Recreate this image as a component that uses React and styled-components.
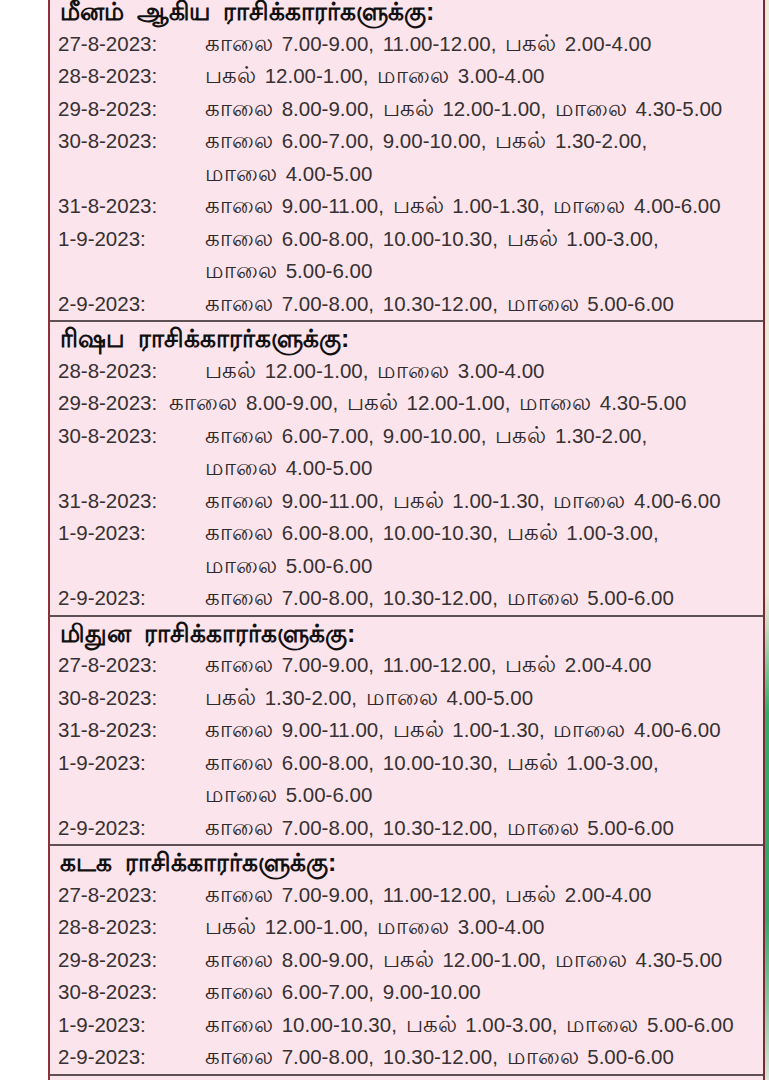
import React from 'react';
import styled, { createGlobalStyle } from 'styled-components';

const GlobalStyle = createGlobalStyle`
  html, body {
    margin: 0;
    padding: 0;
    background: #ffffff;
    overflow: hidden;
  }
`;

const Page = styled.div`
  display: flex;
  width: 769px;
  height: 1080px;
  overflow: hidden;
  font-family: "Liberation Sans", "Noto Sans", sans-serif;
`;

const Gutter = styled.div`
  width: 48px;
  flex-shrink: 0;
  background: #ffffff;
`;

const Box = styled.div`
  flex: 1;
  margin-top: -5px;
  background: #fce4ec;
  border-left: 2px solid #8e2f3a;
  border-right: 2px solid #7c2a32;
`;

const Strip = styled.div`
  width: 4px;
  flex-shrink: 0;
  background: linear-gradient(
    to bottom,
    #f3ead8 0%,
    #efe6d6 55%,
    #c9dcc0 58%,
    #2fae6a 66%,
    #35a86b 85%,
    #8fc7a4 93%,
    #d9e6d8 100%
  );
`;

const Section = styled.section`
  border-bottom: 2px solid #5f5055;
`;

const Title = styled.h2`
  margin: 0;
  padding-left: 10px;
  height: 32.5px;
  line-height: 32.5px;
  font-size: 25px;
  font-weight: 700;
  word-spacing: 6px;
  color: #111111;
  white-space: nowrap;
`;

const Row = styled.div`
  display: ${p => (p.inline ? 'flex' : 'grid')};
  grid-template-columns: 147px 1fr;
  gap: ${p => (p.inline ? '12px' : '0')};
  padding-left: 8px;
  font-size: 20.5px;
  line-height: 32.5px;
  color: #363132;
`;

const DateCell = styled.div`
  white-space: nowrap;
`;

const Times = styled.div`
  white-space: nowrap;
  word-spacing: 3px;
`;

const Word = styled.span`
  font-size: 22.5px;
  color: #2e2a2b;
`;

const tamil = /[\u0B80-\u0BFF]/;

const Line = ({ text }) => (
  <div>
    {text.split(' ').map((part, i) => (
      <React.Fragment key={i}>
        {i > 0 && ' '}
        {tamil.test(part) ? <Word>{part}</Word> : part}
      </React.Fragment>
    ))}
  </div>
);

const sections = [
  {
    title: 'மீனம் ஆகிய ராசிக்காரர்களுக்கு:',
    rows: [
      { date: '27-8-2023:', lines: ['காலை 7.00-9.00, 11.00-12.00, பகல் 2.00-4.00'] },
      { date: '28-8-2023:', lines: ['பகல் 12.00-1.00, மாலை 3.00-4.00'] },
      { date: '29-8-2023:', lines: ['காலை 8.00-9.00, பகல் 12.00-1.00, மாலை 4.30-5.00'] },
      { date: '30-8-2023:', lines: ['காலை 6.00-7.00, 9.00-10.00, பகல் 1.30-2.00,', 'மாலை 4.00-5.00'] },
      { date: '31-8-2023:', lines: ['காலை 9.00-11.00, பகல் 1.00-1.30, மாலை 4.00-6.00'] },
      { date: '1-9-2023:', lines: ['காலை 6.00-8.00, 10.00-10.30, பகல் 1.00-3.00,', 'மாலை 5.00-6.00'] },
      { date: '2-9-2023:', lines: ['காலை 7.00-8.00, 10.30-12.00, மாலை 5.00-6.00'] },
    ],
  },
  {
    title: 'ரிஷப ராசிக்காரர்களுக்கு:',
    rows: [
      { date: '28-8-2023:', lines: ['பகல் 12.00-1.00, மாலை 3.00-4.00'] },
      { date: '29-8-2023:', inline: true, lines: ['காலை 8.00-9.00, பகல் 12.00-1.00, மாலை 4.30-5.00'] },
      { date: '30-8-2023:', lines: ['காலை 6.00-7.00, 9.00-10.00, பகல் 1.30-2.00,', 'மாலை 4.00-5.00'] },
      { date: '31-8-2023:', lines: ['காலை 9.00-11.00, பகல் 1.00-1.30, மாலை 4.00-6.00'] },
      { date: '1-9-2023:', lines: ['காலை 6.00-8.00, 10.00-10.30, பகல் 1.00-3.00,', 'மாலை 5.00-6.00'] },
      { date: '2-9-2023:', lines: ['காலை 7.00-8.00, 10.30-12.00, மாலை 5.00-6.00'] },
    ],
  },
  {
    title: 'மிதுன ராசிக்காரர்களுக்கு:',
    rows: [
      { date: '27-8-2023:', lines: ['காலை 7.00-9.00, 11.00-12.00, பகல் 2.00-4.00'] },
      { date: '30-8-2023:', lines: ['பகல் 1.30-2.00, மாலை 4.00-5.00'] },
      { date: '31-8-2023:', lines: ['காலை 9.00-11.00, பகல் 1.00-1.30, மாலை 4.00-6.00'] },
      { date: '1-9-2023:', lines: ['காலை 6.00-8.00, 10.00-10.30, பகல் 1.00-3.00,', 'மாலை 5.00-6.00'] },
      { date: '2-9-2023:', lines: ['காலை 7.00-8.00, 10.30-12.00, மாலை 5.00-6.00'] },
    ],
  },
  {
    title: 'கடக ராசிக்காரர்களுக்கு:',
    rows: [
      { date: '27-8-2023:', lines: ['காலை 7.00-9.00, 11.00-12.00, பகல் 2.00-4.00'] },
      { date: '28-8-2023:', lines: ['பகல் 12.00-1.00, மாலை 3.00-4.00'] },
      { date: '29-8-2023:', lines: ['காலை 8.00-9.00, பகல் 12.00-1.00, மாலை 4.30-5.00'] },
      { date: '30-8-2023:', lines: ['காலை 6.00-7.00, 9.00-10.00'] },
      { date: '1-9-2023:', lines: ['காலை 10.00-10.30, பகல் 1.00-3.00, மாலை 5.00-6.00'] },
      { date: '2-9-2023:', lines: ['காலை 7.00-8.00, 10.30-12.00, மாலை 5.00-6.00'] },
    ],
  },
  {
    title: 'சிம்ம ராசிக்காரர்களுக்கு:',
    rows: [],
  },
];

const App = () => {
  return (
    <Page>
      <GlobalStyle />
      <Gutter />
      <Box>
        {sections.map(section => (
          <Section key={section.title}>
            <Title>{section.title}</Title>
            {section.rows.map(row => (
              <Row key={row.date} inline={row.inline ? 1 : 0}>
                <DateCell>{row.date}</DateCell>
                <Times>
                  {row.lines.map(line => (
                    <Line key={line} text={line} />
                  ))}
                </Times>
              </Row>
            ))}
          </Section>
        ))}
      </Box>
      <Strip />
    </Page>
  );
};

export default App;
